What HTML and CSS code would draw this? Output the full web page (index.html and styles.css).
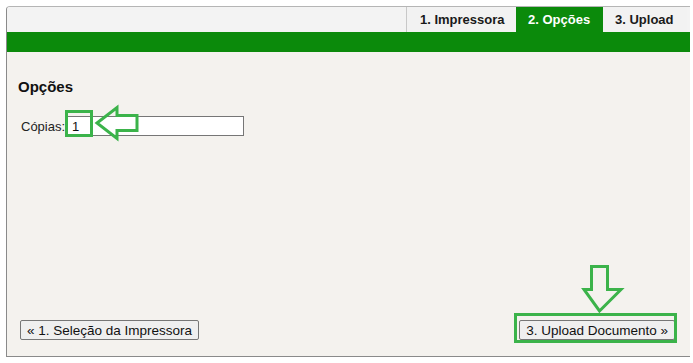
FILE: index.html
```html
<!DOCTYPE html>
<html>
<head>
<meta charset="utf-8">
<title>Imprimir</title>
<link rel="stylesheet" href="styles.css">
</head>
<body>
<div class="wizard">
  <div class="steps">
    <ul class="step_list">
      <li class="first">1. Impressora</li>
      <li class="active">2. Opções</li>
      <li>3. Upload</li>
    </ul>
  </div>
  <div class="bar"></div>
  <div class="cont">
    <h2>Opções</h2>
    <div class="row">
      <label>Cópias:</label>
      <input type="text" class="txt" value="1">
    </div>
    <div class="nav">
      <button class="btn">« 1. Seleção da Impressora</button>
      <button class="btn">3. Upload Documento »</button>
    </div>
  </div>
</div>

<svg class="marks" width="693" height="363" viewBox="0 0 693 363">
  <g fill="none" stroke="#3bb34a" stroke-width="3">
    <rect x="66.5" y="111.5" width="25" height="24"/>
    <polygon points="97,123 117,107.5 117,115.5 137,115.5 137,130.5 117,130.5 117,138.5" stroke-linejoin="miter"/>
    <polygon points="591.5,266.5 607.5,266.5 607.5,289.5 621,289.5 599.5,311 584,289.5 591.5,289.5"/>
    <rect x="515.5" y="314.5" width="160" height="27"/>
  </g>
</svg>
</body>
</html>
```

FILE: styles.css
```css
*{
	margin:0;
	padding:0;
	box-sizing:border-box;
	}
body{
	font-family:"Liberation Sans", Arial, sans-serif;
	font-size:13px;
	color:#222;
	background:#fff;
	position:relative;
	width:693px;
	height:363px;
	overflow:hidden;
	}
li{
	list-style:none;
	}
.wizard{
	margin:6px 0 0 6px;
	width:684px;
	height:351px;
	border:1px solid #8a8a8a;
	border-top-color:#b5b5b5;
	border-right:none;
	border-radius:4px 0 0 0;
	display:flex;
	flex-direction:column;
	overflow:hidden;
	}
.steps{
	height:25px;
	background:#f3f3f3;
	display:flex;
	justify-content:flex-end;
	}
.step_list{
	display:flex;
	margin-right:3px;
	}
.step_list li{
	height:25px;
	line-height:25px;
	padding:0 12px;
	font-weight:bold;
	color:#1a1a1a;
	background:#f2f2f2;
	}
.step_list li.first{
	border-left:1px solid #c8c8c8;
	width:110px;
	padding:0 0 0 13px;
	}
.step_list li.active{
	background:#0b8a0b;
	color:#fff;
	width:87px;
	padding:0 0 0 12px;
	}
.step_list li:last-child{
	width:84px;
	padding:0 0 0 12px;
	}
.bar{
	height:20px;
	background:#0b8a0b;
	}
.cont{
	flex:1;
	background:#f4f2ee;
	padding:26px 13px 16px;
	display:flex;
	flex-direction:column;
	}
.cont h2{
	font-size:15px;
	line-height:18px;
	font-weight:bold;
	color:#111;
	margin-left:-2px;
	}
.row{
	margin-top:20px;
	padding-left:1px;
	display:flex;
	align-items:center;
	height:20px;
	}
.row label{
	color:#222;
	width:44px;
	}
.txt{
	width:179px;
	height:20px;
	border:1px solid #767676;
	background:#fff;
	font-family:"Liberation Sans", Arial, sans-serif;
	font-size:13px;
	padding:0 6px;
	color:#111;
	outline:none;
	}
.nav{
	margin-top:auto;
	display:flex;
	justify-content:space-between;
	padding-right:2px;
	}
.btn{
	height:20px;
	padding:0 6px;
	font-family:"Liberation Sans", Arial, sans-serif;
	font-size:13.5px;
	color:#111;
	background:#efefef;
	border:1px solid #767676;
	border-radius:2px;
	}
.marks{
	position:absolute;
	left:0;
	top:0;
	pointer-events:none;
	}
```
